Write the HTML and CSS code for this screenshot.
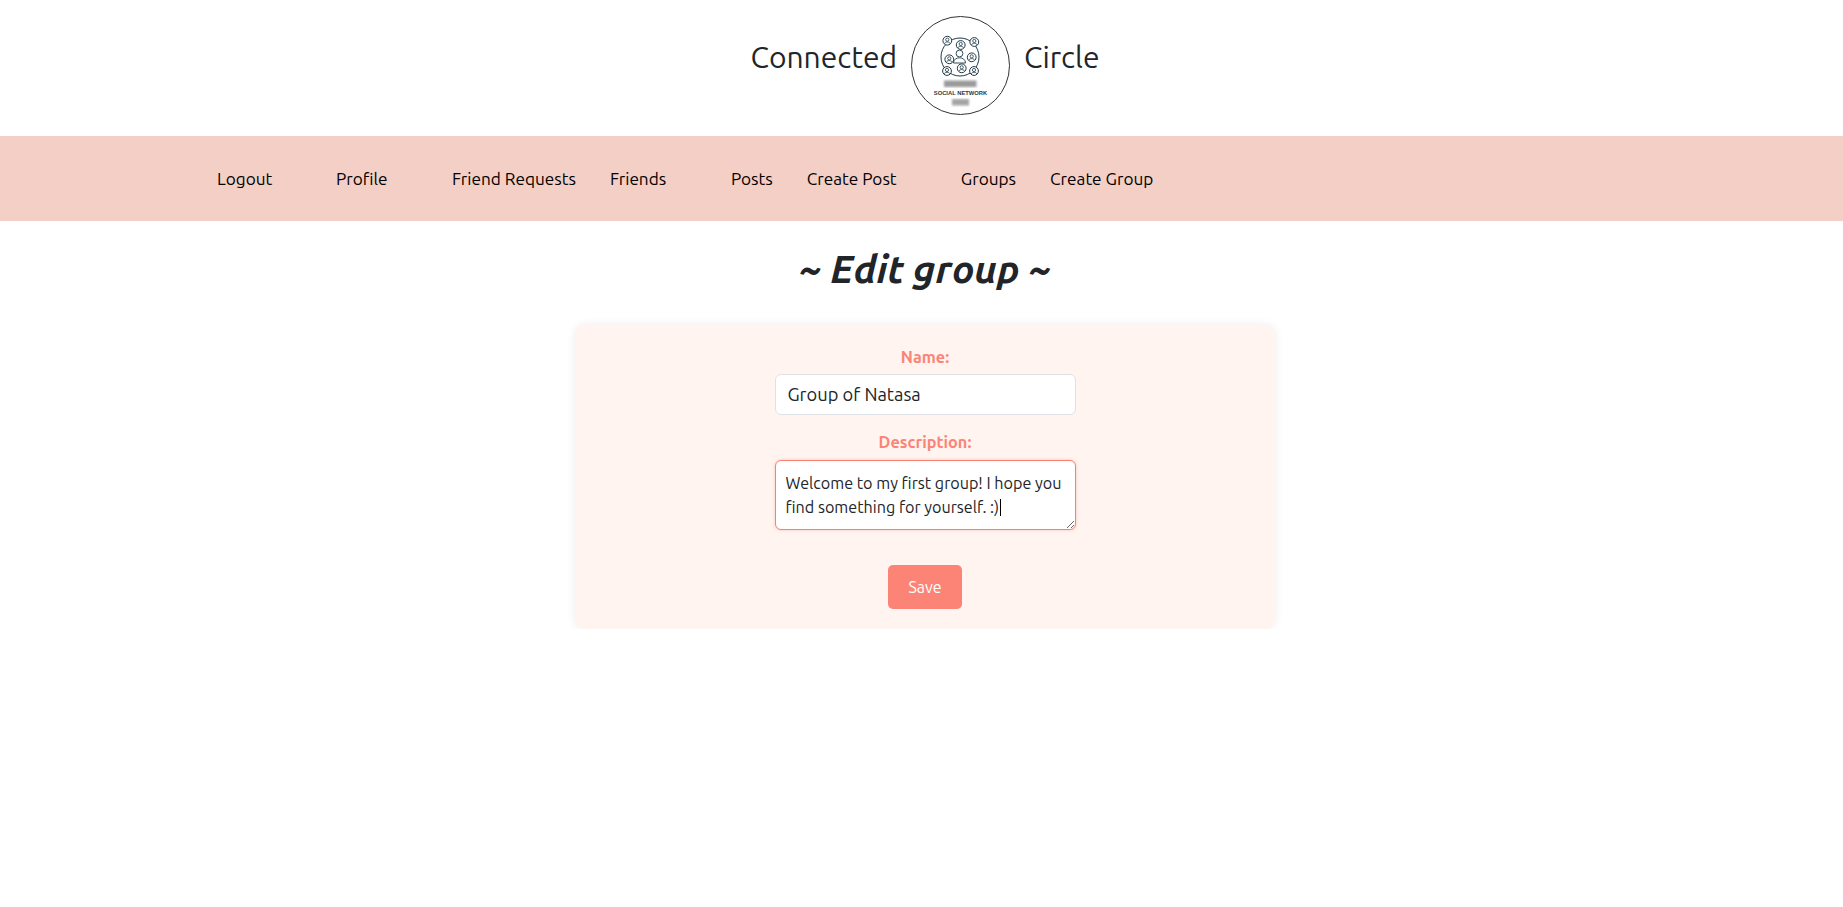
FILE: index.html
```html
<!DOCTYPE html>
<html lang="en">
<head>
    <meta charset="UTF-8">
    <meta name="viewport" content="width=device-width, initial-scale=1.0">
    <title>Edit group</title>
    <link rel="stylesheet" href="styles.css">
</head>
<body>

    <header class="site-header">
        <span class="site-name">Connected</span>
        <svg class="logo" viewBox="0 0 99 99" width="99" height="99">
            <defs>
                <filter id="smudge"><feGaussianBlur stdDeviation="0.8"/></filter>
                <g id="node">
                    <circle r="4.4" fill="#fff" stroke="#1f3a46" stroke-width="1"/>
                    <circle cy="-1" r="1.6" fill="none" stroke="#1f3a46" stroke-width="0.8"/>
                    <path d="M-2.6 2.8 C-2.6 0.8 2.6 0.8 2.6 2.8" fill="none" stroke="#1f3a46" stroke-width="0.8"/>
                </g>
            </defs>
            <circle cx="49.5" cy="49.5" r="49" fill="#fff" stroke="#333" stroke-width="1"/>
            <circle cx="49" cy="41" r="19" fill="none" stroke="#1f3a46" stroke-width="1"/>
            <use href="#node" x="36.3" y="24.7"/>
            <use href="#node" x="63.3" y="26"/>
            <use href="#node" x="49.7" y="29"/>
            <use href="#node" x="38.3" y="43.3"/>
            <use href="#node" x="60.7" y="41.3"/>
            <use href="#node" x="36" y="55"/>
            <use href="#node" x="50.7" y="52.3"/>
            <use href="#node" x="63" y="55"/>
            <circle cx="48.5" cy="37.5" r="3.4" fill="#fff" stroke="#1f3a46" stroke-width="0.9"/>
            <path d="M42.5 47 C42.5 40 54.5 40 54.5 47 Z" fill="#fff" stroke="#1f3a46" stroke-width="0.9"/>
            <rect x="33" y="64.5" width="32.5" height="6.5" fill="#9a9a9a" filter="url(#smudge)"/>
            <text class="logo-text" x="49.5" y="78.8" text-anchor="middle">SOCIAL NETWORK</text>
            <rect x="41" y="83" width="17" height="6.5" fill="#a5a5a5" filter="url(#smudge)"/>
        </svg>
        <span class="site-name">Circle</span>
    </header>

    <nav class="navbar">
        <a class="nav-link logout" href="#">Logout</a>
        <a class="nav-link profile" href="#">Profile</a>
        <a class="nav-link" href="#">Friend Requests</a>
        <a class="nav-link friends" href="#">Friends</a>
        <a class="nav-link" href="#">Posts</a>
        <a class="nav-link create-post" href="#">Create Post</a>
        <a class="nav-link" href="#">Groups</a>
        <a class="nav-link" href="#">Create Group</a>
    </nav>

    <main class="content">
        <h1 class="page-title">~ Edit group ~</h1>
        <form class="group-form">
            <label class="field-label" for="name">Name:</label>
            <input class="name-input" type="text" id="name" value="Group of Natasa">
            <label class="field-label description-label" for="description">Description:</label>
            <div class="textarea-wrap">
                <textarea class="description-input" id="description">Welcome to my first group! I hope you find something for yourself. :)</textarea>
                <span class="caret"></span>
            </div>
            <button class="save-btn" type="button">Save</button>
        </form>
    </main>

</body>
</html>
```

FILE: styles.css
```css
body {
    font-family: Ubuntu, "Noto Sans", "Open Sans", sans-serif;
    background-color: #fff;
    color: #212529;
    font-size: 16px;
    line-height: 1.5;
    margin: 0;
}
.site-header {
    display: flex;
    justify-content: center;
    align-items: flex-start;
    gap: 14px;
    height: 136px;
    padding-top: 16px;
    padding-left: 7px;
    box-sizing: border-box;
}
.site-name {
    font-size: 30px;
    line-height: 36px;
    margin-top: 23px;
}
.logo {
    display: block;
}
.logo-text {
    font-family: "Liberation Sans", sans-serif;
    font-size: 5.8px;
    font-weight: 700;
    fill: #1f3a46;
}
.navbar {
    display: flex;
    align-items: center;
    height: 85px;
    padding-left: 217px;
    background-color: #f4cfc6;
}
.nav-link {
    color: #000;
    font-size: 17.2px;
    text-decoration: none;
    margin-right: 34px;
}
.logout {
    min-width: 85px;
}
.profile {
    min-width: 82px;
}
.friends {
    min-width: 87px;
}
.create-post {
    min-width: 120px;
}
.content {
    display: flex;
    flex-direction: column;
    align-items: center;
    padding-left: 7px;
}
.page-title {
    font-size: 39px;
    font-style: italic;
    font-weight: 700;
    line-height: 48px;
    margin: 24px 0 32px;
}
.group-form {
    display: flex;
    flex-direction: column;
    align-items: center;
    width: 700px;
    padding: 20px;
    box-sizing: border-box;
    background-color: #fff4ef;
    border-radius: 10px;
    box-shadow: 0 0 10px rgba(0, 0, 0, 0.08);
}
.field-label {
    color: #fb8477;
    font-size: 16.3px;
    font-weight: 700;
    margin-bottom: 5px;
}
.description-label {
    margin-top: 15px;
}
.name-input {
    width: 301px;
    height: 41px;
    padding: 5px 12px 6px;
    box-sizing: border-box;
    border: 1px solid #dee2e6;
    border-radius: 6px;
    background-color: #fff;
    color: #212529;
    font-family: inherit;
    font-size: 18.3px;
}
.textarea-wrap {
    position: relative;
    height: 70px;
}
.description-input {
    display: block;
    width: 301px;
    height: 70px;
    padding: 10px;
    box-sizing: border-box;
    border: 1px solid #fa8072;
    border-radius: 6px;
    background-color: #fff;
    box-shadow: 0 0 3px rgba(250, 128, 114, 0.45);
    color: #212529;
    font-family: inherit;
    font-size: 16.15px;
    line-height: 24px;
    outline: none;
}
.caret {
    position: absolute;
    left: 225px;
    top: 39px;
    width: 1px;
    height: 17px;
    background-color: #000;
}
.save-btn {
    width: 74px;
    height: 44px;
    margin-top: 35px;
    border: none;
    border-radius: 5px;
    background-color: #fb8477;
    color: #fff;
    font-family: inherit;
    font-size: 16px;
    cursor: pointer;
}
```
